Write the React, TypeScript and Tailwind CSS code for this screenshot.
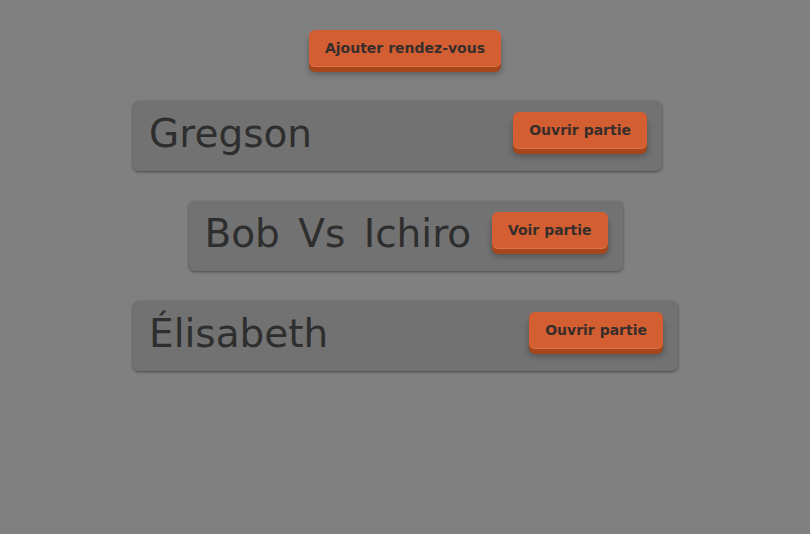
const games = [
  { name: 'Gregson', action: 'Ouvrir partie', width: 'w-[529px] self-start' },
  { name: 'Bob Vs Ichiro', action: 'Voir partie', width: 'w-[434px] self-center' },
  { name: 'Élisabeth', action: 'Ouvrir partie', width: 'w-[545px] self-stretch' },
]

function OrangeButton({ label }: { label: string }) {
  return (
    <button
      className="h-[37px] px-4 rounded-[6px] bg-[#d35e32] text-[#372e2c] text-[14px] font-bold leading-none border-b border-[#de7446] shadow-[0_5px_0_#a5461c,0_7px_6px_rgba(0,0,0,0.3)]"
      style={{ fontFamily: "'DejaVu Sans', sans-serif" }}
    >
      {label}
    </button>
  )
}

export default function App() {
  return (
    <div
      className="min-h-[534px] w-full bg-[#808080] flex flex-col items-center pt-[30px]"
      style={{ fontFamily: "'DejaVu Sans', sans-serif" }}
    >
      <OrangeButton label="Ajouter rendez-vous" />

      <div className="w-[545px] ml-[1px] mt-[34px] flex flex-col gap-[30px]">
        {games.map(g => (
          <div
            key={g.name}
            className={`${g.width} h-[70px] flex items-start justify-between pl-[16px] pr-[15px] pt-[10px] rounded-[6px] bg-[#727272] shadow-[0_1px_3px_rgba(0,0,0,0.45)]`}
          >
            <span className="text-[39px] leading-[1.2] text-[#2e2e2e] [word-spacing:6px] whitespace-nowrap">
              {g.name}
            </span>
            <div className="pt-[1px]">
              <OrangeButton label={g.action} />
            </div>
          </div>
        ))}
      </div>
    </div>
  )
}
